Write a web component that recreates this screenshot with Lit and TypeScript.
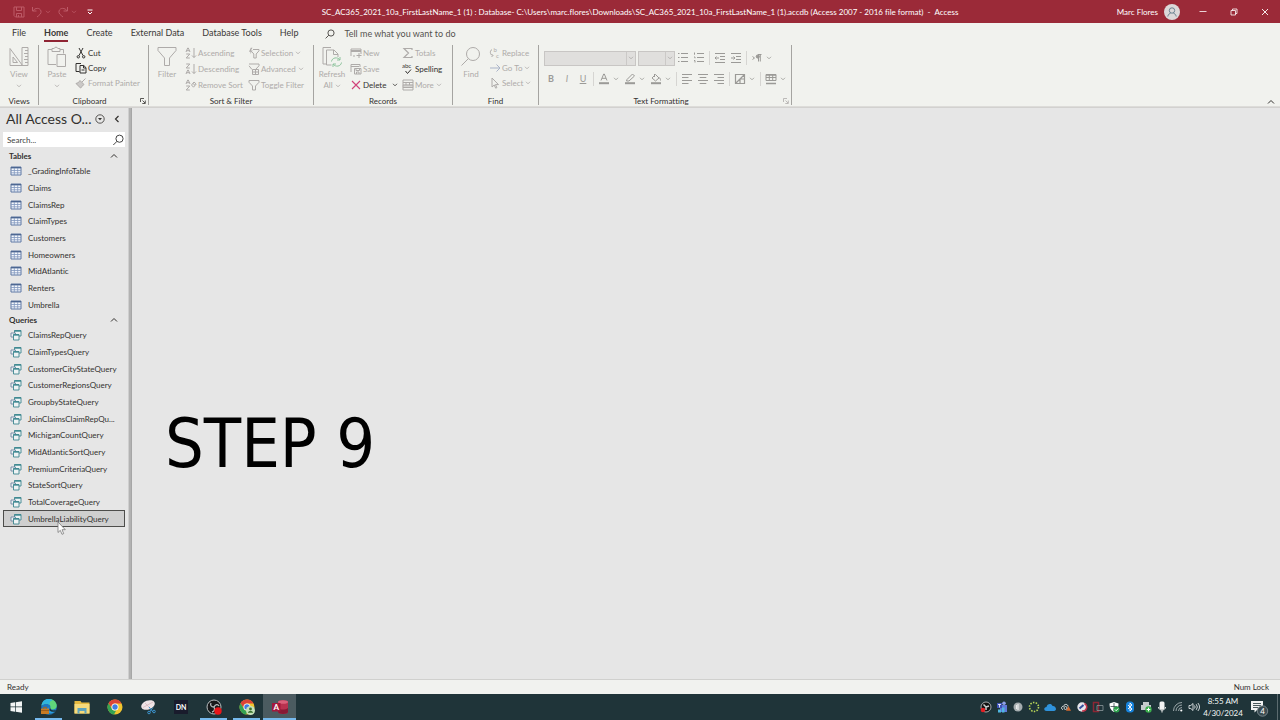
import { LitElement, html, css, svg, nothing, TemplateResult } from "lit";
import { customElement, property, state } from "lit/decorators.js";
import { classMap } from "lit/directives/class-map.js";

type Glyph = { w: number; h: number; body: unknown };

const GLYPHS: Record<string, Glyph> = {
  chevron: { w: 6, h: 4, body: svg`<path d="M1 .8 3 2.8 5 .8" stroke-width=".8"/>` },
  up: { w: 8, h: 6, body: svg`<path d="M1 4.500 4 1.500 7 4.500" stroke-width="1"/>` },
  left: { w: 6, h: 8, body: svg`<path d="M4.500 1 1.500 4 4.500 7" stroke-width="1.200"/>` },
  save: { w: 12, h: 12, body: svg`<path d="M1 1h10v10H2.500L1 9.500zM3.500 1v3.500h5V1M3.500 11V7.500h5V11M5.500 9v2"/>` },
  undo: { w: 12, h: 12, body: svg`<path d="M1.500 1v4h4M1.800 5C4 1.500 9 1.500 10 5c.6 2.500-1.500 4-4 6"/>` },
  redo: { w: 12, h: 12, body: svg`<path d="M10.500 1v4h-4M10.200 5C8 1.500 3 1.500 2 5c-.6 2.500 1.500 4 4 6"/>` },
  custom: { w: 6, h: 6, body: svg`<path d="M.5 1h5M1 3l2 2 2-2"/>` },
  minimize: { w: 8, h: 8, body: svg`<path d="M.5 3.500h7" stroke-width=".8"/>` },
  restore: { w: 8, h: 8, body: svg`<path d="M1 2.500h4.500V7H1zM2.500 2.500V1H7v4.500H5.500" stroke-width=".8"/>` },
  close: { w: 8, h: 8, body: svg`<path d="m1 1 6 6M7 1 1 7" stroke-width=".9"/>` },
  avatar: { w: 16, h: 16, body: svg`<circle cx="8" cy="8" r="8" fill="#dcd8d9" stroke="none"/><g stroke="#6b8290"><circle cx="8" cy="6.500" r="2.700"/><path d="M3.800 12.500c.3-2 1.700-3 2.900-3.500M12.200 12.500c-.3-2-1.700-3-2.900-3.500"/></g>` },
  lens: { w: 10, h: 10, body: svg`<circle cx="6" cy="4" r="3.100"/><path d="M3.800 6.200.6 9.400"/>` },
  lensBig: { w: 12, h: 12, body: svg`<circle cx="7.500" cy="4.700" r="3.600"/><path d="M5 7.300 1.300 11"/>` },
  view: { w: 22, h: 22, body: svg`<path d="M2 2.500v17h12.500zM5 11v5.500h4.500zM14 1.500h6v18h-6zM17 4.500h3M16 7.500h4M17 10.500h3M16 13.500h4M17 16.500h3"/>` },
  paste: { w: 22, h: 22, body: svg`<path d="M6 3.500H2v15h8M14 3.500h3.500v4M6 5.500v-3h2.200C8.500.7 11.500.7 11.800 2.500H14v3zM11 8.500h8.500v12H11z"/>` },
  cut: { w: 12, h: 12, body: svg`<path d="m4 1 4 7.500M8 1 4 8.500"/><circle cx="3.300" cy="9.800" r="1.200"/><circle cx="8.700" cy="9.800" r="1.200"/>` },
  copy: { w: 12, h: 12, body: svg`<path d="M4.500 9.500H1V1.500h5M5 3.500h3.800L11 5.700V11H5zM8.500 3.500V6H11M6.500 8h3"/>` },
  painter: { w: 12, h: 12, body: svg`<path d="M10.500 1.500 7 5M5 3.500l3.800 3.800M5 3.500C4 5.500 2.500 6 1 6.500L5.500 11c1-1 2.500-2 3.300-3.700" fill="#cbc9c7"/>` },
  funnelBig: { w: 22, h: 22, body: svg`<path d="M2 1.500h18v3L13.500 12v7.500h-5V12L2 4.500z"/>` },
  funnel: { w: 12, h: 12, body: svg`<path d="M1 1.500h10v1.800L7.500 7v4h-3V7L1 3.300z"/>` },
  funnelPick: { w: 12, h: 12, body: svg`<path d="M5 2.500h6v1.300L8.200 7v4H5.800V7L4 5"/><path d="M4.500.8 2.800 3.600h2L2 7l.7-2.300H1L2.800.8z" fill="currentColor" stroke="none"/>` },
  funnelGrid: { w: 12, h: 12, body: svg`<path d="M1 1h10v1.800L7.500 6.500M4 6.500 1 2.800M4.500 6.500h6v5h-6zM4.500 9h6M7.500 6.500v5"/>` },
  ascending: { w: 12, h: 12, body: svg`<path d="m1 5 1.700-4h.6L5 5M1.600 3.700h2.800M1.200 7h3.600L1.200 11h3.600M9 1v9.500M7 8.500l2 2 2-2"/>` },
  descending: { w: 12, h: 12, body: svg`<path d="m1 11 1.700-4h.6L5 11M1.600 9.700h2.800M1.200 1h3.600L1.200 5h3.600M9 1v9.500M7 8.500l2 2 2-2"/>` },
  removeSort: { w: 12, h: 12, body: svg`<path d="m1 5 1.700-4h.6L5 5M1.600 3.700h2.800M1.200 7h3.600L1.200 11h3.600M6.500 6 9 3l2.200 2L8.500 8.200zM8 4.500 10 6.300"/>` },
  refresh: { w: 22, h: 22, body: svg`<path d="M5.500 18H2V1.500h8M5.500 4h7.500l4 4v3M5.500 4v15h5M12.500 4v4.500H17"/><path d="M10.500 15.500c.5-4 6-5 8.500-1.500V11M20.500 16.500c-.5 4-6 5-8.500 1.500v3M19 14h-3M12 18h3" stroke="#8fc49e"/>` },
  fresh: { w: 12, h: 12, body: svg`<path d="M1 9V2h10v5M1 4.500h10M1 3.500h10M3 9h2M9 6v5M6.500 8.500h5"/>` },
  saveRecord: { w: 12, h: 12, body: svg`<path d="M1 9V1.500h9V4M1 3.500h8M4.500 5.500H11V11H4.500zM6 5.500v2h3.500v-2M6.500 11V9h2.500v2"/>` },
  cross: { w: 12, h: 12, body: svg`<path d="m2 2 8 8M10 2 2 10" stroke="#d0427a" stroke-width="1.100"/>` },
  sigma: { w: 12, h: 12, body: svg`<path d="M10 3V1.500H2L6.500 6 2 10.500h8V9" stroke-width="1.200"/>` },
  spelling: { w: 12, h: 12, body: svg`<text x="0" y="5" font-size="6" fill="currentColor" stroke="none">abc</text><path d="m3.500 8 2 2.500L9 6.500"/>` },
  more: { w: 12, h: 12, body: svg`<path d="M1 1h10v10H1zM1 3.500h10M1 6h10M1 8.500h10M4 3.500V6M7.500 3.500V6"/><path d="M1 6h10v2.500H1z" fill="currentColor" opacity=".4"/>` },
  find: { w: 22, h: 22, body: svg`<circle cx="13" cy="8" r="6.500"/><path d="M8.400 12.600 1.500 19.500"/>` },
  replace: { w: 12, h: 12, body: svg`<text x="4.500" y="5" font-size="6" fill="currentColor" stroke="none">b</text><text x="7" y="11" font-size="6" fill="currentColor" stroke="none">c</text><path d="M3 2.500C.5 4 1 7.500 3.500 8.500M2.500 10l1.500-1.500L2.500 7"/>` },
  goto: { w: 12, h: 12, body: svg`<path d="M1 6h10M7.500 2.500 11 6 7.500 9.500" stroke="#a9b3c8"/>` },
  pointer: { w: 12, h: 12, body: svg`<path d="M3 1v9l2.200-2 1.500 3.200 1.200-.6-1.500-3H9.500z"/>` },
  bullets: { w: 12, h: 12, body: svg`<path d="M4 1.500h7M4 5.500h7M4 9.500h7M1 1.500h1.500M1 5.500h1.500M1 9.500h1.500"/>` },
  numbers: { w: 12, h: 12, body: svg`<path d="M4 1.500h7M4 5.500h7M4 9.500h7M1.500.5v2.200M1 5h1v1.300M1 8.500h1v2"/>` },
  outdent: { w: 12, h: 12, body: svg`<path d="M1 1.500h10M6 4.500h5M6 7.500h5M1 10.500h10M5 6H1M2.500 4.500 1 6l1.500 1.500"/>` },
  indent: { w: 12, h: 12, body: svg`<path d="M1 1.500h10M6 4.500h5M6 7.500h5M1 10.500h10M1 6h4M3.500 4.500 5 6 3.500 7.500"/>` },
  paragraph: { w: 12, h: 12, body: svg`<path d="M1.500 4.500 3.500 6l-2 1.500"/><path d="M7.500 2.500v7M9.300 2.500v7M10.500 2.500H7"/><circle cx="6.800" cy="4.500" r="1.600" fill="currentColor"/>` },
  fontColor: { w: 12, h: 12, body: svg`<path d="M3 7.500 5.700 1h.6L9 7.500M4 5.300h4"/><path d="M1 10.200h10" stroke-width="2"/>` },
  highlight: { w: 12, h: 12, body: svg`<path d="M3 6.500 8.500 1l2 2L5 8H2.500z"/><path d="M1 10.200h10" stroke-width="2"/>` },
  fill: { w: 12, h: 12, body: svg`<path d="M2 5 5.500 1.500 9 5 5.500 8zM4.500 1v3M9 4.500c1 .5 1.500 1.500 1.500 3"/><path d="M1 10.200h10" stroke-width="2"/>` },
  alignLeft: { w: 12, h: 12, body: svg`<path d="M1 1.500h10M1 4.500h6.500M1 7.500h10M1 10.500h6.500"/>` },
  alignCenter: { w: 12, h: 12, body: svg`<path d="M1 1.500h10M2.700 4.500h6.600M1 7.500h10M2.700 10.500h6.600"/>` },
  alignRight: { w: 12, h: 12, body: svg`<path d="M1 1.500h10M4.500 4.500H11M1 7.500h10M4.500 10.500H11"/>` },
  border: { w: 12, h: 12, body: svg`<path d="M1.500 1.500h9v9h-9zM1.500 10.500l9-9M6 6v4.500M6 6h4.500" stroke-width="1.200"/>` },
  gridlines: { w: 12, h: 12, body: svg`<path d="M1 1.500h10v6H1zM1 4.500h10M4.300 1.500v6M7.700 1.500v6"/><path d="M1 2h10" stroke-width="1.500"/><path d="M1 10.500h10" stroke-width="1.500"/>` },
  launcher: { w: 6, h: 6, body: svg`<path d="M.5 4V.5H4M2.500 2.500l2.500 2.500M5.300 2.500v3h-3" stroke-width=".8"/>` },
  dropCircle: { w: 10, h: 10, body: svg`<circle cx="5" cy="5" r="4.200" stroke-width=".8"/><path d="M3 4h4L5 6.300z" fill="currentColor" stroke="none"/>` },
  table: { w: 12, h: 10, body: svg`<path d="M1 1h10v8H1z" fill="#f4f7fc" stroke="#5d77a3"/><path d="M1 1.700h10" stroke="#4d6792" stroke-width="1.400"/><path d="M1 4.500h10M1 6.800h10M4.300 2v7M7.700 2v7" stroke="#7f96bd" stroke-width=".8"/>` },
  query: { w: 12, h: 12, body: svg`<g fill="#eef3f4" stroke="#3c8790" stroke-width=".9"><path d="M4.500 1.500h6.500v5.500H4.500z"/><path d="M4.500 2h6.500" stroke-width="1.400"/><path d="M1 4h4.500v4H1z" stroke="#6d87a2"/><path d="M3.500 5.500h5.500V11H3.500z"/><path d="M3.500 6h5.500" stroke-width="1.300"/></g>` },
  cursor: { w: 9, h: 14, body: svg`<path d="M1 1v10.500l2.300-2.200 1.700 4 1.700-.7-1.700-3.900h3.300z" fill="#fff" stroke="#777" stroke-width=".8"/>` },
};

const icon = (name: string) => {
  const g = GLYPHS[name];
  return html`<svg class="icon" width=${g.w} height=${g.h} viewBox="0 0 ${g.w} ${g.h}" fill="none" stroke="currentColor" aria-hidden="true">${g.body}</svg>`;
};

const chrome = () => svg`<circle cx="8" cy="8" r="7.500" fill="#f1c52f"/><path d="M1.500 4.200A7.500 7.500 0 0 1 14.700 4.600H8A3.500 3.500 0 0 0 4.800 9.700z" fill="#dc4437"/><path d="M1.500 4.200 4.900 9.800A3.500 3.500 0 0 0 9.300 11.300L7 15.500A7.500 7.500 0 0 1 1.500 4.200" fill="#35a352"/><circle cx="8" cy="8" r="3.500" fill="#fff"/><circle cx="8" cy="8" r="2.700" fill="#3f7de0"/>`;

const TASKS: { label: string; state?: string; art: unknown }[] = [
  { label: "Start", art: svg`<path d="M2.500 4 7 3.300v4.300H2.500zM7.700 3.200 14 2.300v5.300H7.700zM2.500 8.300H7v4.400l-4.500-.6zM7.700 8.300H14v5.400l-6.300-.9z" fill="#f2f5f5"/>` },
  { label: "Edge", state: "open", art: svg`<circle cx="8" cy="8" r="7.800" fill="#1c78c4"/><path d="M.5 6.500C2.500-1.500 13-2 15.500 5c1 3.500-1 5.500-4 5.500-2.500 0-2.500-1.500-2-2.500C9.500 5 4 3.500.5 6.500" fill="#5fd67a"/><path d="M.5 6.500C2-1.500 9-1 11.500 1.500 8 1.500 9 5 8.500 6 6.500 4 3 4.500.5 6.500" fill="#2fb4e0"/><path d="M9.500 8c-1 3 2.500 4 5.500 3-1.500 3.500-5 4.500-8 4z" fill="#1f3439"/><path d="M8 8c-1.500 4 3 5.500 6 4.500-3 3.500-9 3-9-1.500" fill="#2a9be0"/><rect x="0" y="9.500" width="8" height="5.500" fill="#c77b24"/><path d="M0 11.500h8" stroke="#8d5218" stroke-width=".7"/><path d="M2.500 9.500V8.300h3v1.200" stroke="#a5661d" fill="none"/>` },
  { label: "File Explorer", art: svg`<path d="M.5 2h6l1 1.500h8v11H.5z" fill="#e6b93f"/><path d="M.5 5h15v9.500H.5z" fill="#f7db7c"/><path d="M3.500 9h9v5.500h-2V12h-5v2.500h-2z" fill="#5fa4bd"/>` },
  { label: "Chrome", art: chrome() },
  { label: "Snipping Tool", art: svg`<ellipse cx="8" cy="6" rx="7" ry="4.500" transform="rotate(-20 8 6)" fill="#eee4e6"/><path d="M3 8.500 13 3M5 4l5 5" stroke="#d3b0b7" fill="none" stroke-width=".7"/><path d="m9 8 4 5M13 8.500 9.500 13" stroke="#3c94cf" fill="none"/><circle cx="9" cy="13.500" r="1.300" fill="none" stroke="#3c94cf"/><circle cx="14" cy="12.500" r="1.300" fill="none" stroke="#3c94cf"/>` },
  { label: "DN", art: svg`<rect x="1" y="1" width="14" height="14" fill="#191b2c"/><text x="8" y="10.500" text-anchor="middle" font-size="7" font-weight="700" fill="#fff">DN</text>` },
  { label: "OBS Studio", state: "open", art: svg`<circle cx="8" cy="8" r="7" fill="#17191b" stroke="#b7bdbf"/><path d="M8 8c-3 0-4-2-3-4M8 8c1.500-3 4-3 5-1M8 8c1.500 2.500 0 4.500-2 5" fill="none" stroke="#b7bdbf" stroke-width="1.300"/><circle cx="12" cy="12" r="3.700" fill="#e8161b"/>` },
  { label: "Chrome profile", state: "open", art: svg`${chrome()}<circle cx="11.500" cy="11.500" r="4.500" fill="#c5e2ba"/><circle cx="11.500" cy="10" r="1.400" fill="#38702c"/><path d="M8.800 13.700c.4-2.200 5-2.200 5.400 0z" fill="#38702c"/>` },
  { label: "Access", state: "active", art: svg`<path d="M6 3c0-2.500 10-2.500 10 0v10c0 2.500-10 2.500-10 0z" fill="#b8324f"/><ellipse cx="11" cy="3" rx="5" ry="1.800" fill="#d9607a"/><path d="M6 9c3 2 7 2 10 0v4c0 2.500-10 2.500-10 0z" fill="#861a35"/><rect x="0" y="4" width="8.500" height="8.500" fill="#a3193c"/><text x="4.200" y="11" text-anchor="middle" font-size="8" font-weight="700" fill="#fff">A</text>` },
];

const TRAY: { label: string; art: unknown }[] = [
  { label: "OBS recording", art: svg`<circle cx="6" cy="6" r="5" fill="#111" stroke="#c9cdce" stroke-width=".8"/><path d="M6 6 3.500 3.500M6 6l3-1M6 6v3" stroke="#c9cdce" stroke-width="1.500"/><circle cx="3" cy="9" r="2.300" fill="#e11f24"/>` },
  { label: "Teams", art: svg`<circle cx="8" cy="2.200" r="1.800" fill="#8fa1ea"/><rect x="4" y="4" width="7" height="7" fill="#5f78d8"/><rect x="1" y="2" width="5" height="5" fill="#3d52b5"/><path d="M2 3.500h3M3.500 3.500V6.500" stroke="#fff" stroke-width=".8"/><path d="M2 11.500V8.500h3v3zM6 11.500v-5h2.500v5z" fill="#4fb6e0"/>` },
  { label: "Security agent", art: svg`<circle cx="6" cy="6" r="4.500" fill="#a5adaf"/><path d="M6 3v6M4.500 4v4" stroke="#e8ebeb" stroke-width="1.200"/>` },
  { label: "Sync", art: svg`<circle cx="6" cy="6" r="4.500" fill="none" stroke="#b8d458" stroke-width="1.600" stroke-dasharray="1.500 1.300"/>` },
  { label: "OneDrive", art: svg`<path d="M2.500 10C-.5 10-.5 6 2.500 6 3 2.500 7.500 2 8.500 5c3.500-.5 5 5 1.500 5z" fill="#2f93dc"/>` },
  { label: "Cloud warning", art: svg`<path d="M3 8.500C.5 8 1.500 5 3.500 5.300 4.500 2.500 8 3 8 5.500" fill="none" stroke="#e6e8e8"/><path d="M8.500 5 11 9.800H6z" fill="#d26930"/><circle cx="5.500" cy="7" r="1.500" fill="none" stroke="#e6e8e8" stroke-width=".8"/>` },
  { label: "Remote", art: svg`<circle cx="6" cy="6" r="4.700" fill="#e6e6ec"/><path d="M8.500 2.500A4 4 0 0 1 6 10" fill="none" stroke="#c43349" stroke-width="1.500"/><path d="m3.500 7.500 4-3.500" stroke="#344d9b" stroke-width="2"/>` },
  { label: "Display", art: svg`<path d="M1.500 1.500h5v9h-5z" fill="none" stroke="#8c2634" stroke-width="1.500"/><path d="M5 4.500h6v5H5z" fill="none" stroke="#8b979a" stroke-width=".8"/>` },
  { label: "Windows Security", art: svg`<path d="M6 1 10.500 2.500c0 4-1 6.500-4.500 8.500C2.500 9 1.500 6.500 1.500 2.500z" fill="#fff"/><path d="M6 2v8M2.500 5.500h7" stroke="#21343a" stroke-width=".7"/><circle cx="8.500" cy="8.500" r="3" fill="#2ca24c"/><path d="m7 8.500 1.200 1.200 2-2.200" stroke="#fff" fill="none"/>` },
  { label: "Bluetooth", art: svg`<rect x="2" y=".5" width="8" height="11" rx="3.500" fill="#1683dc"/><path d="m4 4 4 4-2 2V2l2 2-4 4" stroke="#fff" fill="none" stroke-width=".9"/>` },
  { label: "Printer", art: svg`<path d="M3 1h6v3H3zM1 4h10v5H1z" fill="#c5cbcc"/><circle cx="8.500" cy="8.500" r="3.200" fill="#3ab04c"/><path d="M8.500 6.700v3.600M6.700 8.500h3.600" stroke="#fff"/>` },
  { label: "Microphone", art: svg`<rect x="3.500" y=".5" width="5" height="8" rx="1.500" fill="#f2f3f3"/><path d="M2.500 6c0 4 7 4 7 0M6 9v2.500" stroke="#f2f3f3" fill="none"/>` },
  { label: "Wi-Fi", art: svg`<path d="M1.500 10A8.500 8.500 0 0 1 10 1.500M4 10a6 6 0 0 1 6-6M6.500 10A3.500 3.500 0 0 1 10 6.500" fill="none" stroke="#aab4b7" stroke-width=".9"/><circle cx="9.300" cy="9.500" r="1.100" fill="#fff"/>` },
  { label: "Volume", art: svg`<path d="M1 4.500h1.800L5 2.500v7L2.800 7.500H1zM6.500 4.500q1.300 1.500 0 3M8.200 3.200q2.300 2.800 0 5.600M9.900 2q3.300 4 0 8" fill="none" stroke="#dfe4e5" stroke-width=".9"/>` },
];

@customElement("ribbon-button")
class RibbonButton extends LitElement {
  @property() icon = "";
  @property() label = "";
  @property({ type: Boolean }) off = false;
  @property({ type: Boolean }) big = false;
  @property({ type: Boolean }) menu = false;
  static styles = css`
    :host { display: block; }
    .button {
      display: flex; align-items: center; gap: 1px; height: 100%; padding: 0; border: 0;
      background: none; color: #33312f; font: inherit; font-variant-ligatures: none; white-space: nowrap;
    }
    .button:disabled { color: #aeaba9; }
    .big { flex-direction: column; gap: 0; width: 100%; line-height: 11px; }
    .big > .icon { margin: 1px 0; }
    .icon { flex: none; display: block; }
    .menu { display: inline-flex; align-items: center; gap: 2px; text-align: center; }
    .caption { display: flex; flex-direction: column; align-items: center; gap: 4px; }
  `;
  render() {
    const words = this.label.split(" ");
    const split = this.big && words.length > 1;
    return html`<button class=${classMap({ button: true, big: this.big })} ?disabled=${this.off}>
      ${icon(this.icon)}
      ${split
        ? html`<span>${words[0]}</span><span class="menu">${words[1]} ${icon("chevron")}</span>`
        : this.big
          ? html`<span class="caption">${this.label}${this.menu ? icon("chevron") : nothing}</span>`
          : html`<span class="menu">${this.label}${this.menu ? icon("chevron") : nothing}</span>`}
    </button>`;
  }
}

@customElement("app-root")
class AppRoot extends LitElement {
  @state() private selected = "UmbrellaLiabilityQuery";

  private tabs = ["File", "Home", "Create", "External Data", "Database Tools", "Help"];
  private tables = ["_GradingInfoTable", "Claims", "ClaimsRep", "ClaimTypes", "Customers", "Homeowners", "MidAtlantic", "Renters", "Umbrella"];
  private queries = [
    "ClaimsRepQuery", "ClaimTypesQuery", "CustomerCityStateQuery", "CustomerRegionsQuery", "GroupbyStateQuery", "JoinClaimsClaimRepQu...",
    "MichiganCountQuery", "MidAtlanticSortQuery", "PremiumCriteriaQuery", "StateSortQuery", "TotalCoverageQuery", "UmbrellaLiabilityQuery",
  ];

  static styles = css`
    * { box-sizing: border-box; }
    :host {
      display: flex; flex-direction: column; height: 100vh; overflow: hidden;
      font: 8px/12px Lato, "Open Sans", sans-serif; color: #33312f; background: #e6e6e6;
      font-variant-ligatures: none;
    }
    button { padding: 0; border: 0; background: none; color: inherit; font: inherit; font-variant-ligatures: none; }
    .icon { flex: none; display: block; }

    .titlebar { display: grid; grid-template-columns: 1fr auto 1fr; align-items: center; height: 23px; background: #9b2a38; color: #fff; }
    .quick { display: flex; align-items: center; gap: 6px; padding-left: 13px; color: #bd5a67; }
    .quick button { display: flex; align-items: center; gap: 2px; }
    .quick .bright { color: #fff; padding-left: 4px; }
    .account { display: flex; align-items: center; justify-content: flex-end; height: 23px; }
    .user { display: flex; align-items: center; gap: 6px; padding-right: 7px; }
    .window { display: grid; place-items: center; width: 31px; height: 22px; }

    .tabs { display: flex; height: 21px; padding-left: 3px; background: #f1f2ee; font-size: 9px; }
    .tab { display: flex; align-items: center; padding: 0 9px; color: #3b3937; text-decoration: none; }
    .tab span { padding: 2px 0 1px; border-bottom: 2px solid transparent; line-height: 12px; }
    .tab.current { font-weight: 700; }
    .tab.current span { border-color: #8f2433; }
    .tell { display: flex; align-items: center; gap: 9px; padding-left: 18px; color: #55534f; }
    .tell input { width: 130px; border: 0; padding: 0; background: none; font: inherit; color: inherit; outline: 0; }
    .tell input::placeholder, .search input::placeholder { color: inherit; opacity: 1; }

    .ribbon { display: flex; height: 63px; padding-top: 1px; background: #f1f2ee; border-bottom: 1px solid #dddcd9; }
    .group { display: flex; flex-direction: column; height: 60px; border-right: 1px solid #a5a4a1; }
    .body { display: flex; flex: none; height: 50px; }
    .label { display: flex; flex: none; align-items: center; justify-content: center; height: 12px; }
    .label .name { flex: 1; text-align: center; }
    .label button { padding-right: 2px; }
    .stack { display: grid; grid-auto-rows: 16px; align-content: start; }
    .stack.tight { grid-auto-rows: 15px; }
    .row { display: flex; align-items: center; }
    .views { width: 39px; }
    .clipboard { width: 110px; }
    .sort { width: 165px; }
    .records { width: 139px; }
    .finding { width: 86px; }
    .text { width: 253px; }
    .text .label button { color: #aeaba9; }
    .bigcell { width: 36px; }
    .views .bigcell { width: 38px; }
    .sortcol { width: 63px; }
    .reccol { width: 52px; }
    .delete { display: flex; gap: 6px; align-items: center; }
    .format { display: flex; flex-direction: column; padding: 5px 0 0 4px; gap: 5px; }
    .format .row { height: 16px; color: #9b9a97; }
    .format .tool { display: grid; place-items: center; width: 16px; height: 16px; }
    .format .arrow { display: grid; place-items: center; width: 8px; height: 16px; margin-right: 2px; }
    .format .rule { width: 1px; height: 14px; margin: 0 2px; background: #d6d5d2; }
    .format .first { margin-left: 1px; }
    .bold { font-weight: 700; font-size: 9px; }
    .italic { font-style: italic; font-size: 9px; }
    .underline { text-decoration: underline; font-size: 9px; }
    .combo { display: flex; align-items: center; height: 15px; margin-right: 2px; border: 1px solid #c8c6c4; background: #e0dfdd; color: #aaa8a6; }
    .combo select { flex: 1; min-width: 0; height: 100%; appearance: none; border: 0; border-right: 1px solid #cbc9c7; background: none; opacity: 1; }
    .combo .icon { margin: 0 1px; }
    .combo.face { width: 92px; }
    .combo.size { width: 37px; margin-right: 0; }
    .collapse { display: flex; flex: 1; align-items: flex-end; justify-content: flex-end; padding: 0 5px 1px 0; }

    .workspace { display: flex; flex: 1; min-height: 0; border-top: 1px solid #d2d1cf; }
    .pane { width: 128px; padding: 0 3px; }
    .panehead { display: flex; align-items: center; height: 22px; margin-bottom: 2px; padding-left: 3px; }
    .panehead h1 { flex: 1; margin: 0; font-size: 14px; font-weight: 400; line-height: 22px; white-space: nowrap; }
    .panehead button { display: grid; place-items: center; width: 17px; height: 20px; }
    .search { display: flex; align-items: center; height: 15px; margin-bottom: 2px; padding: 0 1px 0 4px; background: #fff; color: #444; }
    .search input { flex: 1; min-width: 0; border: 0; padding: 0; font: inherit; color: inherit; outline: 0; background: none; }
    .section { display: flex; align-items: center; justify-content: space-between; width: 100%; height: 14px; padding: 0 7px 0 6px; font-weight: 700; }
    .list { display: grid; grid-auto-rows: 1fr; margin: 0; padding: 0; list-style: none; }
    .tables { height: 150px; }
    .queries { height: 200px; }
    .list li { position: relative; display: grid; min-width: 0; }
    .object { display: flex; align-items: center; gap: 6px; min-width: 0; padding: 0 2px 0 6px; border: 1px solid transparent; text-align: left; white-space: nowrap; }
    .object.chosen { border-color: #4d4d4b; background: #cfcfcf; }
    .cursor { position: absolute; left: 54px; top: 11px; }
    .splitter { width: 4px; background: #b2b2b2; border-left: 1px solid #cfcfcf; border-right: 1px solid #a6a6a6; }
    .canvas { flex: 1; display: flex; align-items: center; padding: 100px 0 0 33px; }
    .canvas p { margin: 0; font: 68px/80px "DejaVu Sans Condensed", "DejaVu Sans", sans-serif; color: #000; }

    .status { display: flex; align-items: center; justify-content: space-between; height: 15px; padding: 0 11px 1px 7px; background: #f1f2ef; border-top: 1px solid #d0d0ce; }

    .taskbar { display: flex; align-items: stretch; height: 26px; background: #1f3439; color: #f3f6f6; }
    .task { display: grid; place-items: center; width: 33px; border: 0 solid #76b9ed; }
    .task:first-child { width: 32px; }
    .task.open { width: 27px; margin: 0 3px; border-bottom-width: 2px; padding-top: 2px; }
    .task.active { background: #4b5b60; border-bottom-width: 2px; padding-top: 2px; }
    .tray { display: flex; flex: 1; justify-content: flex-end; }
    .tray button { display: grid; place-items: center; width: 16px; }
    .tray .clock { width: 42px; margin-right: 3px; padding-bottom: 1px; align-content: center; line-height: 12px; }
    .tray .notes { width: 24px; margin-right: 6px; }
    .desktop { width: 3px; border-left: 1px solid #5b6b6f; }
  `;

  private tool(name: string) {
    return html`<button class="tool" disabled aria-label=${name}>${icon(name)}</button>`;
  }

  private arrow(name: string) {
    return html`<button class="arrow" disabled aria-label="${name} options">${icon("chevron")}</button>`;
  }

  private group(cls: string, name: string, body: TemplateResult, launcher = false) {
    return html`<section class="group ${cls}" aria-label=${name}>
      <div class="body">${body}</div>
      <div class="label"><span class="name">${name}</span>${launcher ? html`<button aria-label="${name} settings">${icon("launcher")}</button>` : nothing}</div>
    </section>`;
  }

  private objects(cls: string, names: string[], glyph: string) {
    return html`<ul class="list ${cls}">
      ${names.map((n) => html`<li>
        <button class=${classMap({ object: true, chosen: n === this.selected })} @click=${() => (this.selected = n)}>
          ${icon(glyph)}<span>${n}</span>
        </button>
        ${n === "UmbrellaLiabilityQuery" ? html`<span class="cursor">${icon("cursor")}</span>` : nothing}
      </li>`)}
    </ul>`;
  }

  render() {
    return html`
      <header class="titlebar">
        <div class="quick">
          <button aria-label="Save">${icon("save")}</button>
          <button aria-label="Undo">${icon("undo")}${icon("chevron")}</button>
          <button aria-label="Redo">${icon("redo")}${icon("chevron")}</button>
          <button class="bright" aria-label="Customize">${icon("custom")}</button>
        </div>
        <div>SC_AC365_2021_10a_FirstLastName_1 (1) : Database- C:\\Users\\marc.flores\\Downloads\\SC_AC365_2021_10a_FirstLastName_1 (1).accdb (Access 2007 - 2016 file format) &nbsp;-&nbsp; Access</div>
        <div class="account">
          <button class="user">Marc Flores ${icon("avatar")}</button>
          <button class="window" aria-label="Minimize">${icon("minimize")}</button>
          <button class="window" aria-label="Restore">${icon("restore")}</button>
          <button class="window" aria-label="Close">${icon("close")}</button>
        </div>
      </header>

      <nav class="tabs">
        ${this.tabs.map((t) => html`<a href="#" class=${classMap({ tab: true, current: t === "Home" })}><span>${t}</span></a>`)}
        <label class="tell">${icon("lens")}<input aria-label="Tell me" placeholder="Tell me what you want to do" /></label>
      </nav>

      <div class="ribbon">
        ${this.group("views", "Views", html`<ribbon-button class="bigcell" icon="view" label="View" big off menu></ribbon-button>`)}
        ${this.group("clipboard", "Clipboard", html`
          <ribbon-button class="bigcell" icon="paste" label="Paste" big off menu></ribbon-button>
          <div class="stack tight">
            <ribbon-button icon="cut" label="Cut"></ribbon-button>
            <ribbon-button icon="copy" label="Copy"></ribbon-button>
            <ribbon-button icon="painter" label="Format Painter" off></ribbon-button>
          </div>`, true)}
        ${this.group("sort", "Sort & Filter", html`
          <ribbon-button class="bigcell" icon="funnelBig" label="Filter" big off></ribbon-button>
          <div class="stack sortcol">
            <ribbon-button icon="ascending" label="Ascending" off></ribbon-button>
            <ribbon-button icon="descending" label="Descending" off></ribbon-button>
            <ribbon-button icon="removeSort" label="Remove Sort" off></ribbon-button>
          </div>
          <div class="stack">
            <ribbon-button icon="funnelPick" label="Selection" off menu></ribbon-button>
            <ribbon-button icon="funnelGrid" label="Advanced" off menu></ribbon-button>
            <ribbon-button icon="funnel" label="Toggle Filter" off></ribbon-button>
          </div>`)}
        ${this.group("records", "Records", html`
          <ribbon-button class="bigcell" icon="refresh" label="Refresh All" big off menu></ribbon-button>
          <div class="stack reccol">
            <ribbon-button icon="fresh" label="New" off></ribbon-button>
            <ribbon-button icon="saveRecord" label="Save" off></ribbon-button>
            <div class="delete"><ribbon-button icon="cross" label="Delete"></ribbon-button><button aria-label="Delete options">${icon("chevron")}</button></div>
          </div>
          <div class="stack">
            <ribbon-button icon="sigma" label="Totals" off></ribbon-button>
            <ribbon-button icon="spelling" label="Spelling"></ribbon-button>
            <ribbon-button icon="more" label="More" off menu></ribbon-button>
          </div>`)}
        ${this.group("finding", "Find", html`
          <ribbon-button class="bigcell" icon="find" label="Find" big off></ribbon-button>
          <div class="stack tight">
            <ribbon-button icon="replace" label="Replace" off></ribbon-button>
            <ribbon-button icon="goto" label="Go To" off menu></ribbon-button>
            <ribbon-button icon="pointer" label="Select" off menu></ribbon-button>
          </div>`)}
        ${this.group("text", "Text Formatting", html`
          <div class="format">
            <div class="row">
              <span class="combo face first"><select disabled aria-label="Font"></select>${icon("chevron")}</span>
              <span class="combo size"><select disabled aria-label="Font size"></select>${icon("chevron")}</span>
              ${this.tool("bullets")}${this.tool("numbers")}<span class="rule"></span>
              ${this.tool("outdent")}${this.tool("indent")}<span class="rule"></span>
              ${this.tool("paragraph")}${this.arrow("paragraph")}
            </div>
            <div class="row">
              <button class="tool bold" disabled>B</button><button class="tool italic" disabled>I</button><button class="tool underline" disabled>U</button>
              <span class="rule"></span>
              ${this.tool("fontColor")}${this.arrow("fontColor")}${this.tool("highlight")}${this.arrow("highlight")}${this.tool("fill")}${this.arrow("fill")}
              <span class="rule"></span>
              ${this.tool("alignLeft")}${this.tool("alignCenter")}${this.tool("alignRight")}
              <span class="rule"></span>
              ${this.tool("border")}${this.arrow("border")}<span class="rule"></span>${this.tool("gridlines")}${this.arrow("gridlines")}
            </div>
          </div>`, true)}
        <div class="collapse"><button aria-label="Collapse the ribbon">${icon("up")}</button></div>
      </div>

      <main class="workspace">
        <aside class="pane">
          <div class="panehead">
            <h1>All Access O...</h1>
            <button aria-label="Object types">${icon("dropCircle")}</button>
            <button aria-label="Collapse pane">${icon("left")}</button>
          </div>
          <label class="search"><input aria-label="Search" placeholder="Search..." />${icon("lensBig")}</label>
          <button class="section">Tables ${icon("up")}</button>
          ${this.objects("tables", this.tables, "table")}
          <button class="section">Queries ${icon("up")}</button>
          ${this.objects("queries", this.queries, "query")}
        </aside>
        <div class="splitter"></div>
        <div class="canvas"><p>STEP 9</p></div>
      </main>

      <footer class="status"><span>Ready</span><span>Num Lock</span></footer>

      <nav class="taskbar">
        ${TASKS.map((t) => html`<button class="task ${t.state ?? ""}" aria-label=${t.label}><svg class="icon" width="16" height="16" viewBox="0 0 16 16">${t.art}</svg></button>`)}
        <div class="tray">
          ${TRAY.map((t) => html`<button aria-label=${t.label}><svg class="icon" width="12" height="12" viewBox="0 0 12 12">${t.art}</svg></button>`)}
          <button class="clock"><span>8:55 AM</span><span>4/30/2024</span></button>
          <button class="notes" aria-label="4 notifications"><svg class="icon" width="20" height="20" viewBox="0 0 20 20">
            <path d="M2 4h12v9H8l-2.500 2.500V13H2z" fill="#f2f4f4" /><path d="M4 6.500h8M4 8.500h8M4 10.500h5" stroke="#1f3439" stroke-width=".8" />
            <circle cx="13.500" cy="14" r="5.200" fill="#3b4c51" stroke="#87949a" stroke-width=".8" /><text x="13.500" y="17" text-anchor="middle" font-size="8" fill="#fff">4</text>
          </svg></button>
          <div class="desktop"></div>
        </div>
      </nav>`;
  }
}
